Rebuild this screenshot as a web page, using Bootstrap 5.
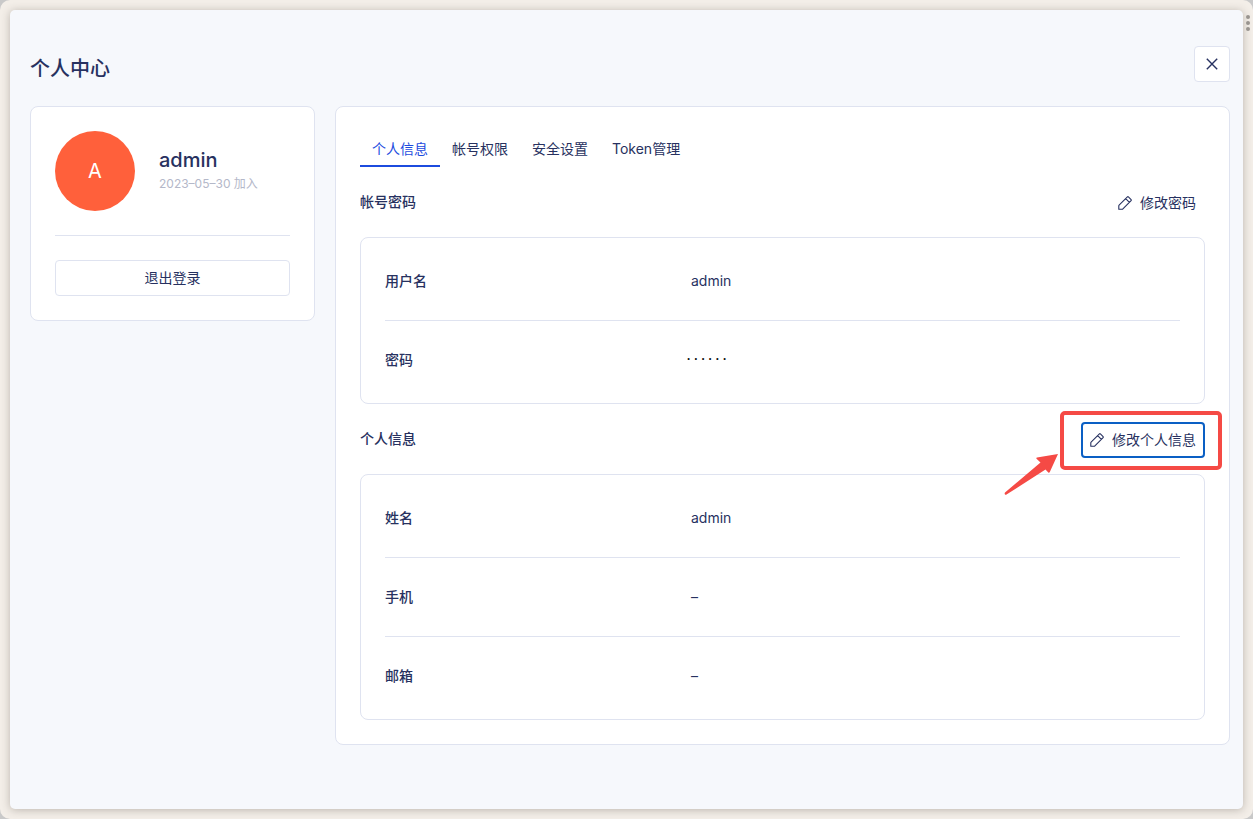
<!DOCTYPE html>
<html lang="zh-CN">
<head>
<meta charset="utf-8">
<meta name="viewport" content="width=device-width, initial-scale=1">
<title>个人中心</title>
<link href="https://cdn.jsdelivr.net/npm/bootstrap@5.3.0/dist/css/bootstrap.min.css" rel="stylesheet">
<style>
:root { --ink: #273160; --line: #dfe3f0; --blue: #1c4bde; --red: #f54a45; }
body { background: #c9c9c9; color: var(--ink); font-family: Inter, "Noto Sans CJK SC", sans-serif; font-size: 14px; line-height: 20px; }
.window-frame { min-height: 100vh; padding: 10px; background: #f3eee8; border-radius: 10px; }
.panel { padding: 36px 13px 36px 20px; background: #f6f8fc; border-radius: 5px; box-shadow: 0 1px 8px rgba(60, 50, 40, .3); }
.grip { top: 15px; right: 3px; width: 4px; }
.grip i { display: block; height: 4px; margin-bottom: 2px; border-radius: 50%; background: #99948f; }
.page-title { font-size: 20px; line-height: 26px; font-weight: 500; }
.btn-line { --bs-btn-border-color: var(--line); --bs-btn-bg: #fff; --bs-btn-color: var(--ink); --bs-btn-font-size: 14px; --bs-btn-line-height: 20px; --bs-btn-border-radius: 4px; --bs-btn-padding-y: 7px; --bs-btn-hover-color: var(--blue); --bs-btn-hover-border-color: var(--blue); }
.btn-close-panel { width: 36px; height: 36px; padding: 0; }
.box { background: #fff; border: 1px solid var(--line); border-radius: 8px; }
.layout-gap { gap: 20px; }
.side { flex: 0 0 285px; }
.avatar { width: 80px; height: 80px; background: #ff603b; font-size: 20px; }
.user-name { font-size: 20px; line-height: 28px; font-weight: 500; }
.join-date { padding-bottom: 2px; font-size: 12px; color: #b4b8c9; }
.rule { border-top: 1px solid var(--line); }
.tab-row .nav-link { padding: 8px 12px 6px; border-bottom: 2px solid transparent; line-height: 20px; color: var(--ink); }
.tab-row .nav-link.active { color: var(--blue); border-color: var(--blue); }
.section-head { margin: 18px 0 16px; }
.section-title { padding-bottom: 2px; font-size: 14px; line-height: 20px; font-weight: 500; }
.btn-edit { --bs-btn-color: var(--ink); --bs-btn-font-size: 14px; --bs-btn-line-height: 20px; --bs-btn-border-width: 2px; --bs-btn-border-radius: 4px; --bs-btn-padding-x: 7px; --bs-btn-padding-y: 6px; --bs-btn-hover-color: var(--blue); }
.btn-edit.current { border-color: #0a5fc4; }
.callout-frame { inset: -11px -17px -12px -21px; border: 4px solid var(--red); border-radius: 5px; pointer-events: none; }
.callout-arrow { right: 147px; top: 32px; pointer-events: none; }
.info-box { padding: 4px 24px; }
.info-table { table-layout: fixed; }
.info-table th { width: 300px; padding: 29px 0; font-weight: 500; }
.info-table td { padding: 29px 6px; }
.info-table tr + tr { border-top: 1px solid var(--line); }
.info-table td.secret { padding-left: 0; font-family: "Liberation Mono", monospace; font-size: 12px; font-weight: 700; color: #111; }
@media (max-width: 767px) { .info-table th { width: 120px; } .side { flex-basis: auto; } }
</style>
</head>
<body>
<svg class="d-none" aria-hidden="true">
  <symbol id="pencil" viewBox="0 0 14 14">
    <path d="M1.1 9.1 9.4.9Q9.900.4 10.400.9L13.100 3.600Q13.600 4.100 13.100 4.600L4.900 12.900Q4.600 13.300 4.100 13.300H.8V9.900Q.8 9.400 1.100 9.100ZM7.700 2.600 11.400 6.300" fill="none" stroke="currentColor" stroke-width="1.1" stroke-linejoin="round"/>
  </symbol>
</svg>
<div class="window-frame position-relative d-flex flex-column">
  <div class="grip position-absolute" aria-hidden="true"><i></i><i></i><i></i></div>
  <main class="panel flex-grow-1">
    <header class="d-flex justify-content-between align-items-end mb-4">
      <h1 class="page-title mb-0">个人中心</h1>
      <button type="button" class="btn btn-line btn-close-panel d-flex align-items-center justify-content-center" aria-label="关闭">
        <svg width="12" height="12" viewBox="0 0 12 12"><path d="M.8.8 11.2 11.2M11.2.8.8 11.2" fill="none" stroke="currentColor" stroke-width="1.4"/></svg>
      </button>
    </header>
    <div class="layout-gap d-flex flex-column flex-md-row align-items-stretch align-items-md-start">
      <aside class="side box p-4">
        <div class="d-flex align-items-center gap-4">
          <div class="avatar rounded-circle flex-shrink-0 d-flex align-items-center justify-content-center text-white">A</div>
          <div>
            <div class="user-name">admin</div>
            <div class="join-date">2023–05–30 加入</div>
          </div>
        </div>
        <div class="rule my-4"></div>
        <button type="button" class="btn btn-line w-100">退出登录</button>
      </aside>
      <section class="box p-4 flex-grow-1">
        <nav class="tab-row nav">
          <a class="nav-link active" aria-current="page" href="#profile">个人信息</a>
          <a class="nav-link" href="#permission">帐号权限</a>
          <a class="nav-link" href="#security">安全设置</a>
          <a class="nav-link" href="#token">Token管理</a>
        </nav>
        <div class="section-head d-flex justify-content-between align-items-center">
          <h2 class="section-title mb-0">帐号密码</h2>
          <button type="button" class="btn btn-edit d-flex align-items-center gap-2"><svg width="14" height="14" overflow="visible"><use href="#pencil"/></svg>修改密码</button>
        </div>
        <div class="box info-box">
          <table class="info-table w-100">
            <tbody>
              <tr><th scope="row">用户名</th><td>admin</td></tr>
              <tr><th scope="row">密码</th><td class="secret">······</td></tr>
            </tbody>
          </table>
        </div>
        <div class="section-head d-flex justify-content-between align-items-center">
          <h2 class="section-title mb-0">个人信息</h2>
          <div class="position-relative">
            <button type="button" class="btn btn-edit current d-flex align-items-center gap-2"><svg width="14" height="14" overflow="visible"><use href="#pencil"/></svg>修改个人信息</button>
            <div class="callout-frame position-absolute"></div>
            <svg class="callout-arrow position-absolute" width="54" height="41" viewBox="0 0 54 41" aria-hidden="true"><path d="M54 0 33 3.500Q32 4 32.500 4.800L36.500 8.500 1 38.500Q.3 39.500 1 40.500 1.700 41 2.500 40.500L41.500 15.500 44.300 18.500Q45.200 19.200 45.800 18Z" fill="#f54a45"/></svg>
          </div>
        </div>
        <div class="box info-box">
          <table class="info-table w-100">
            <tbody>
              <tr><th scope="row">姓名</th><td>admin</td></tr>
              <tr><th scope="row">手机</th><td>–</td></tr>
              <tr><th scope="row">邮箱</th><td>–</td></tr>
            </tbody>
          </table>
        </div>
      </section>
    </div>
  </main>
</div>
<script src="https://cdn.jsdelivr.net/npm/bootstrap@5.3.0/dist/js/bootstrap.bundle.min.js"></script>
</body>
</html>
